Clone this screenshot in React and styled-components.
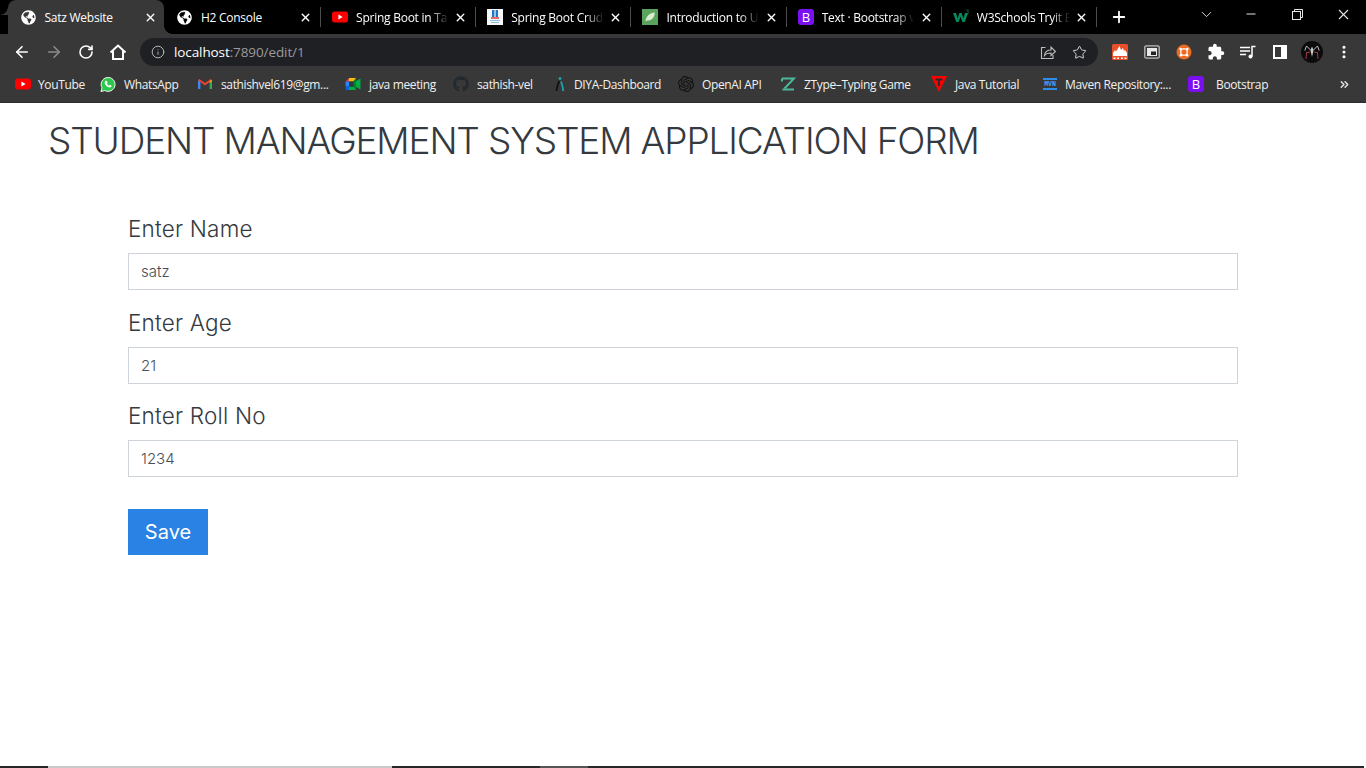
import React from 'react';
import styled, { createGlobalStyle } from 'styled-components';
import { ArrowLeft, ArrowRight, RotateCw, Info, Star, X, Plus, ChevronDown, Minus, EllipsisVertical, ChevronsRight } from 'lucide-react';
import { FaGlobeAmericas, FaGithub } from 'react-icons/fa';
import { MdExtension } from 'react-icons/md';
import { SiOpenai } from 'react-icons/si';

const GlobalStyle = createGlobalStyle`
  html, body {
    margin: 0;
    padding: 0;
    height: 100%;
    overflow: hidden;
    background: #fff;
  }
  * {
    box-sizing: border-box;
  }
`;

const YoutubeIcon = () => (
  <svg width="16" height="16" viewBox="0 0 16 16">
    <rect x="0" y="2.5" width="16" height="11" rx="3" fill="#f00" />
    <path d="M6.4 5.6 10.6 8 6.4 10.4z" fill="#fff" />
  </svg>
);

const WhatsappIcon = () => (
  <svg width="17" height="17" viewBox="0 0 17 17">
    <path d="M1 16l1.100-4A7.400 7.400 0 1 1 5 14.900z" fill="#2cc84d" stroke="#fff" strokeWidth="1" />
    <path d="M6.200 4.600c-.5 0-1.200.7-1.200 1.800 0 2.300 2.900 5.300 5.300 5.300 1.100 0 1.900-.7 1.900-1.300v-.7L10.400 8.800l-.9.9C8.700 9.400 7.600 8.300 7.300 7.500l.8-.9-.9-2z" fill="#fff" />
  </svg>
);

const SpringCrudIcon = () => (
  <svg width="16" height="16" viewBox="0 0 16 16">
    <rect width="16" height="16" fill="#f4f8fb" />
    <rect x="5" y="1" width="2.4" height="7" fill="#1f76c4" />
    <rect x="8.6" y="1" width="2.4" height="7" fill="#1f76c4" />
    <rect x="4" y="8" width="8" height="2" fill="#e86a6a" />
    <rect x="3" y="11" width="10" height="1" fill="#8fb8dc" />
    <rect x="4" y="13" width="8" height="1" fill="#8fb8dc" />
  </svg>
);

const LeafIcon = () => (
  <svg width="16" height="16" viewBox="0 0 16 16">
    <rect width="16" height="16" fill="#5ba35c" />
    <path d="M3.5 12.5C4 7 8 4 12.8 3.6 12.6 8.4 10 11.6 6 11.4 5.2 11.4 4.6 11.8 3.5 12.5z" fill="#d8ecd2" />
  </svg>
);

const BootstrapIcon = () => (
  <svg width="16" height="16" viewBox="0 0 16 16">
    <rect width="16" height="16" rx="3" fill="#7a10f0" />
    <text x="8" y="12.8" textAnchor="middle" fontFamily="'Open Sans', sans-serif" fontSize="13" fontWeight="500" fill="#fff">B</text>
  </svg>
);

const W3Icon = () => (
  <svg width="16" height="16" viewBox="0 0 16 16">
    <path d="M0 4h3l1.6 5.6L6.4 4h2.2l1.8 5.6L12 4h3l-3.2 9H9.4L7.5 7.8 5.6 13H3.2z" fill="#04895c" />
    <path d="M13.2 1h2.2v.6l-.9.9c.6.1 1 .5 1 1 0 .7-.6 1.1-1.3 1.1-.4 0-.8-.1-1.1-.3" fill="none" stroke="#04895c" strokeWidth=".7" />
  </svg>
);

const GmailIcon = () => (
  <svg width="16" height="16" viewBox="0 0 16 16">
    <path d="M1 13V4.200L3.400 5.400V13z" fill="#4285f4" />
    <path d="M12.600 13V5.400L15 4.200V13z" fill="#34a853" />
    <path d="M1 4.200 8 9.400 15 4.200 13.600 3 8 7 2.400 3z" fill="#ea4335" />
    <path d="M12.600 5.400 15 3.800V5l-2.400 1.900z" fill="#fbbc04" />
  </svg>
);

const MeetIcon = () => (
  <svg width="16" height="16" viewBox="0 0 16 16">
    <path d="M4 2h7v3.500H4z" fill="#fbbc04" />
    <path d="M.5 5.500 4 2v3.500z" fill="#ea4335" />
    <path d="M.5 5.500H4v5H.5z" fill="#2684fc" />
    <path d="M.5 10.500H4V14H2a1.500 1.500 0 0 1-1.500-1.500z" fill="#0066da" />
    <path d="M4 10.500h7V14H4z" fill="#00ac47" />
    <path d="M11 5l4.500-2.500v11L11 11z" fill="#00ac47" />
    <path d="M11 2v12l-3-3.500v-5z" fill="#00832d" />
    <path d="M4 5.500h4.500v5H4z" fill="#2b3a3f" />
  </svg>
);

const DiyaIcon = () => (
  <svg width="16" height="16" viewBox="0 0 16 16" fill="none">
    <circle cx="8" cy="2.600" r="1.400" fill="#1aa9b8" />
    <path d="M7.400 5C6 7.500 4.800 10.500 4.500 15" stroke="#111" strokeWidth="1.800" />
    <path d="M9 5.500C10 8 11 11 11.300 15" stroke="#18a6b5" strokeWidth="1.800" />
  </svg>
);

const ZTypeIcon = () => (
  <svg width="16" height="16" viewBox="0 0 16 16" fill="none">
    <path d="M2 2.500h12L4.500 12.500" stroke="#4cb89a" strokeWidth="2" />
    <path d="M2 5.500V2.500M2.500 13.500h11.500" stroke="#4cb89a" strokeWidth="2" />
  </svg>
);

const JavaIcon = () => (
  <svg width="16" height="16" viewBox="0 0 16 16">
    <path d="M0 0h16L8 16z" fill="#f00" />
    <path d="M4.500 2.500h7v2H9V10H7V4.500H4.500z" fill="#2a2a2a" />
  </svg>
);

const MavenIcon = () => (
  <svg width="16" height="16" viewBox="0 0 16 16">
    <rect x="1" y="2" width="14" height="2" fill="#2f8fe8" />
    <rect x="1" y="12" width="14" height="2" fill="#2f8fe8" />
    <text x="8" y="10.400" textAnchor="middle" fontFamily="'Liberation Mono', monospace" fontSize="6.500" fontWeight="700" fill="#4aa3f5">MVN</text>
  </svg>
);

const HomeIcon = () => (
  <svg width="18" height="18" viewBox="0 0 18 18" fill="none" stroke="#fff" strokeWidth="2">
    <path d="M1.500 9.500 9 2.500l7.500 7" />
    <path d="M4 8v8h10V8" />
  </svg>
);

const ShareIcon = () => (
  <svg width="16" height="16" viewBox="0 0 16 16" fill="none" stroke="#bdbdbd" strokeWidth="1.100">
    <path d="M5.500 3.500H1.500v11h11.500V11" />
    <path d="M4.500 11.500C5 7.500 8 6 11 6V3l4.500 4.500L11 11.500V9C8.500 9 6 9.500 4.500 11.500z" />
  </svg>
);

const FireExtIcon = () => (
  <svg width="16" height="16" viewBox="0 0 16 16">
    <rect width="16" height="16" rx="1.500" fill="#e8502a" />
    <path d="M1 12V9l2-3 1 1.500L7.500 2 9 6l2-2 1 3 1-1 2 3v3z" fill="#fff" />
    <path d="M1.500 13.500h2V15h-2zM5 13.500h2V15H5zM9 13.500h2V15H9zM12.500 13.500h2V15h-2z" fill="#fff" />
  </svg>
);

const PipExtIcon = () => (
  <svg width="16" height="16" viewBox="0 0 16 16" fill="none">
    <rect x=".8" y="1.800" width="14.400" height="12.400" rx="1.500" stroke="#bdbdbd" strokeWidth="1.300" />
    <rect x="3" y="4" width="10" height="8" fill="#e8e8e8" />
    <rect x="7" y="7.500" width="5" height="3.500" fill="#222" />
  </svg>
);

const UbuntuExtIcon = () => (
  <svg width="16" height="16" viewBox="0 0 16 16" fill="none">
    <circle cx="8" cy="8" r="7.500" fill="#ec6b23" />
    <circle cx="8" cy="8" r="3.300" stroke="#fbe0ce" strokeWidth="1.500" />
    <circle cx="4.600" cy="5" r="1.300" fill="#fff" />
    <circle cx="11.400" cy="5" r="1.300" fill="#fff" />
    <circle cx="5" cy="11.200" r="1.300" fill="#fff" />
    <circle cx="11" cy="11.200" r="1.300" fill="#fff" />
  </svg>
);

const QueueIcon = () => (
  <svg width="16" height="16" viewBox="0 0 16 16" fill="none" stroke="#fff">
    <path d="M0 3.500h10M0 7h10M0 10.500h6" strokeWidth="1.400" />
    <path d="M12 12.500V2.500h3.500" strokeWidth="1.500" />
    <circle cx="10.500" cy="12.500" r="2" fill="#fff" strokeWidth="0" />
  </svg>
);

const SidePanelIcon = () => (
  <svg width="14" height="14" viewBox="0 0 14 14">
    <path fillRule="evenodd" d="M0 0h14v14H0zM2 2v10h6V2z" fill="#fff" />
  </svg>
);

const SpiderAvatar = () => (
  <svg width="22" height="22" viewBox="0 0 22 22" fill="none">
    <circle cx="11" cy="11" r="11" fill="#0b0b0d" />
    <path d="M11 5.500 9.500 9l1.500 7 1.500-7z" fill="#c8ccd0" />
    <path d="M9.500 9 5.500 5 3.800 9.500M12.500 9l4-4 1.700 4.500" stroke="#b8bcc0" strokeWidth="1" />
    <path d="M9.500 11 5.500 11.500 5 18M12.500 11l4 .5.500 6.500" stroke="#a83a3a" strokeWidth="1" />
  </svg>
);

const RestoreIcon = () => (
  <svg width="11" height="11" viewBox="0 0 11 11" fill="none" stroke="#e6e6e6">
    <rect x=".5" y="2.500" width="8" height="8" />
    <path d="M2.500 2.500v-2h8v8h-2" />
  </svg>
);

const tabs = [
  { title: 'Satz Website', icon: <FaGlobeAmericas size={15} color="#fff" />, active: true },
  { title: 'H2 Console', icon: <FaGlobeAmericas size={15} color="#fff" /> },
  { title: 'Spring Boot in Ta', icon: <YoutubeIcon /> },
  { title: 'Spring Boot Crud', icon: <SpringCrudIcon /> },
  { title: 'Introduction to U', icon: <LeafIcon /> },
  { title: 'Text · Bootstrap v', icon: <BootstrapIcon /> },
  { title: 'W3Schools Tryit E', icon: <W3Icon /> },
];

const bookmarks = [
  { label: 'YouTube', icon: <YoutubeIcon />, width: 85, gap: 7 },
  { label: 'WhatsApp', icon: <WhatsappIcon />, width: 97 },
  { label: 'sathishvel619@gm...', icon: <GmailIcon />, width: 148 },
  { label: 'java meeting', icon: <MeetIcon />, width: 108 },
  { label: 'sathish-vel', icon: <FaGithub size={16} color="#24292e" />, width: 99 },
  { label: 'DIYA-Dashboard', icon: <DiyaIcon />, width: 126, gap: 6 },
  { label: 'OpenAI API', icon: <SiOpenai size={16} color="#111" />, width: 102 },
  { label: 'ZType–Typing Game', icon: <ZTypeIcon />, width: 151 },
  { label: 'Java Tutorial', icon: <JavaIcon />, width: 111 },
  { label: 'Maven Repository:...', icon: <MavenIcon />, width: 146, gap: 7 },
  { label: 'Bootstrap', icon: <BootstrapIcon />, width: 150, gap: 12 },
];

const fields = [
  { label: 'Enter Name', value: 'satz' },
  { label: 'Enter Age', value: '21' },
  { label: 'Enter Roll No', value: '1234' },
];

const App = () => {
  return (
    <Screen>
      <GlobalStyle />
      <TabStrip>
        {tabs.map((tab, i) => (
          <Tab key={tab.title} $active={tab.active} $divider={i > 1}>
            <TabIcon>{tab.icon}</TabIcon>
            <TabTitle $fade={i > 1}>{tab.title}</TabTitle>
            <TabClose>
              <X size={13} strokeWidth={2.6} color="#fff" />
            </TabClose>
          </Tab>
        ))}
        <NewTab>
          <Plus size={18} strokeWidth={2.4} color="#fff" />
        </NewTab>
        <WindowControls>
          <WindowButton $w={44}>
            <ChevronDown size={17} strokeWidth={1.3} color="#e6e6e6" />
          </WindowButton>
          <WindowButton $w={46}>
            <Minus size={14} strokeWidth={1.7} color="#e6e6e6" />
          </WindowButton>
          <WindowButton $w={46}>
            <RestoreIcon />
          </WindowButton>
          <WindowButton $w={46}>
            <X size={17} strokeWidth={1.5} color="#e6e6e6" />
          </WindowButton>
        </WindowControls>
      </TabStrip>

      <Toolbar>
        <NavButton><ArrowLeft size={18} strokeWidth={2.2} color="#fff" /></NavButton>
        <NavButton><ArrowRight size={18} strokeWidth={2.2} color="#8a8a8a" /></NavButton>
        <NavButton><RotateCw size={16} strokeWidth={2.4} color="#fff" /></NavButton>
        <NavButton><HomeIcon /></NavButton>
        <Omnibox>
          <Info size={14} strokeWidth={1.6} color="#bdbdbd" />
          <Url>localhost<UrlRest>:7890/edit/1</UrlRest></Url>
          <OmniActions>
            <ShareIcon />
            <Star size={15} strokeWidth={1.5} color="#dcdcdc" />
          </OmniActions>
        </Omnibox>
        <Extensions>
          <ExtButton><FireExtIcon /></ExtButton>
          <ExtButton><PipExtIcon /></ExtButton>
          <ExtButton><UbuntuExtIcon /></ExtButton>
          <ExtButton><MdExtension size={18} color="#fff" /></ExtButton>
          <ExtButton><QueueIcon /></ExtButton>
          <ExtButton><SidePanelIcon /></ExtButton>
          <ExtButton><SpiderAvatar /></ExtButton>
          <ExtButton><EllipsisVertical size={16} strokeWidth={2.6} color="#fff" /></ExtButton>
        </Extensions>
      </Toolbar>

      <BookmarkBar>
        {bookmarks.map((b) => (
          <Bookmark key={b.label} $w={b.width}>
            <BookmarkIcon>{b.icon}</BookmarkIcon>
            <BookmarkLabel $gap={b.gap}>{b.label}</BookmarkLabel>
          </Bookmark>
        ))}
        <MoreBookmarks>
          <ChevronsRight size={13} strokeWidth={2.6} color="#e6e6e6" />
        </MoreBookmarks>
      </BookmarkBar>

      <Page>
        <Heading>STUDENT MANAGEMENT SYSTEM APPLICATION FORM</Heading>
        <Form onSubmit={(e) => e.preventDefault()}>
          {fields.map((f) => (
            <Field key={f.label}>
              <Label>{f.label}</Label>
              <Input type="text" defaultValue={f.value} />
            </Field>
          ))}
          <SaveButton type="submit">Save</SaveButton>
        </Form>
      </Page>

      <Taskbar>
        <TaskSegment $w={48} $color="#272727" />
        <TaskSegment $w={344} $color="#c9c9c9" />
        <TaskSegment $w={148} $color="#272727" />
        <TaskSegment $w={48} $color="#555555" />
        <TaskSegment $w={776} $color="#272727" />
      </Taskbar>
    </Screen>
  );
};

export default App;

const Screen = styled.div`
  width: 1366px;
  height: 768px;
  display: flex;
  flex-direction: column;
  overflow: hidden;
  font-family: 'Open Sans', 'Liberation Sans', sans-serif;
`;

const TabStrip = styled.div`
  height: 34px;
  flex: none;
  display: flex;
  padding-left: 8px;
  background: #000;
`;

const Tab = styled.div`
  position: relative;
  width: ${(p) => (p.$active ? 156.4 : 155.2)}px;
  flex: none;
  display: flex;
  align-items: center;
  padding: 0 6px 0 12.5px;
  color: #fff;
  border-radius: 8px 8px 0 0;
  background: ${(p) => (p.$active ? '#383838' : 'transparent')};

  &::before {
    content: '';
    display: ${(p) => (p.$divider ? 'block' : 'none')};
    position: absolute;
    left: 0.5px;
    top: 7px;
    width: 1px;
    height: 20px;
    background: #4d4d4d;
  }

  ${(p) =>
    p.$active &&
    `
    &::before, &::after {
      content: '';
      display: block;
      position: absolute;
      bottom: 0;
      width: 8px;
      height: 8px;
    }
    &::before {
      left: -8px;
      background: radial-gradient(circle at 0 0, transparent 7.5px, #383838 8px);
    }
    &::after {
      right: -8px;
      background: radial-gradient(circle at 100% 0, transparent 7.5px, #383838 8px);
    }
  `}
`;

const TabIcon = styled.span`
  width: 16px;
  height: 16px;
  flex: none;
  display: flex;
  align-items: center;
  justify-content: center;
`;

const TabTitle = styled.span`
  flex: 1;
  min-width: 0;
  margin: 0 2px 0 8px;
  white-space: nowrap;
  font-size: 12px;
  letter-spacing: -0.25px;
  mask-image: ${(p) => (p.$fade ? 'linear-gradient(90deg, #000 78%, transparent 98%)' : 'none')};
`;

const TabClose = styled.span`
  width: 16px;
  height: 16px;
  flex: none;
  display: flex;
  align-items: center;
  justify-content: center;
`;

const NewTab = styled.div`
  position: relative;
  width: 46px;
  flex: none;
  display: flex;
  align-items: center;
  justify-content: center;

  &::before {
    content: '';
    position: absolute;
    left: 0.5px;
    top: 7px;
    width: 1px;
    height: 20px;
    background: #4d4d4d;
  }
`;

const WindowControls = styled.div`
  margin-left: auto;
  display: flex;
`;

const WindowButton = styled.div`
  width: ${(p) => p.$w}px;
  height: 28px;
  display: flex;
  align-items: center;
  justify-content: center;
`;

const Toolbar = styled.div`
  height: 32px;
  flex: none;
  display: flex;
  align-items: flex-end;
  padding-left: 6px;
  background: #383838;
`;

const NavButton = styled.div`
  width: 32px;
  height: 28px;
  flex: none;
  display: flex;
  align-items: center;
  justify-content: center;
`;

const Omnibox = styled.div`
  width: 958px;
  height: 28px;
  flex: none;
  margin-left: 6px;
  padding: 0 11px;
  display: flex;
  align-items: center;
  border-radius: 14px;
  background: #1f2024;
`;

const Url = styled.span`
  margin-left: 9px;
  font-size: 13.5px;
  letter-spacing: -0.1px;
  color: #fff;
`;

const UrlRest = styled.span`
  color: #9a9a9a;
`;

const OmniActions = styled.div`
  margin-left: auto;
  display: flex;
  align-items: center;
  gap: 16px;
`;

const Extensions = styled.div`
  flex: none;
  margin-left: 6px;
  display: flex;
`;

const ExtButton = styled.div`
  width: 32px;
  height: 28px;
  display: flex;
  align-items: center;
  justify-content: center;
`;

const BookmarkBar = styled.div`
  height: 37px;
  flex: none;
  display: flex;
  align-items: center;
  padding-left: 15px;
  background: #383838;
  border-bottom: 1px solid #2c2c2c;
`;

const Bookmark = styled.div`
  width: ${(p) => p.$w}px;
  flex: none;
  display: flex;
  align-items: center;
  min-width: 0;
`;

const BookmarkIcon = styled.span`
  width: 16px;
  height: 16px;
  flex: none;
  display: flex;
  align-items: center;
  justify-content: center;
`;

const BookmarkLabel = styled.span`
  margin-left: ${(p) => p.$gap || 8}px;
  white-space: nowrap;
  font-size: 12px;
  letter-spacing: -0.36px;
  color: #f1f1f1;
`;

const MoreBookmarks = styled.div`
  margin-left: auto;
  margin-right: 16px;
  display: flex;
`;

const Page = styled.main`
  flex: 1;
  min-height: 0;
  padding: 14px 128px 0 48px;
  background: #fff;
`;

const Heading = styled.h1`
  margin: 0;
  font-family: Inter, 'Open Sans', sans-serif;
  font-size: 37px;
  line-height: 48px;
  font-weight: 300;
  letter-spacing: -1.15px;
  color: #343a40;
`;

const Form = styled.form`
  margin: 45px 0 0 80px;
  display: flex;
  flex-direction: column;
`;

const Field = styled.div`
  height: 93.5px;
  display: flex;
  flex-direction: column;
`;

const Label = styled.label`
  height: 37px;
  display: flex;
  align-items: center;
  margin-bottom: 6px;
  font-family: Inter, 'Open Sans', sans-serif;
  font-size: 22.5px;
  font-weight: 300;
  letter-spacing: 0.2px;
  color: #343a40;
`;

const Input = styled.input`
  width: 1110px;
  height: 37px;
  padding: 0 12px;
  border: 1px solid #ced4da;
  outline: none;
  background: #fff;
  font-family: Inter, 'Open Sans', sans-serif;
  font-size: 15px;
  font-weight: 300;
  color: #495057;
`;

const SaveButton = styled.button`
  width: 80px;
  height: 46px;
  margin-top: 18px;
  padding: 0;
  border: none;
  background: #2a82e4;
  font-family: Inter, 'Open Sans', sans-serif;
  font-size: 20px;
  color: #fff;
`;

const Taskbar = styled.div`
  height: 2px;
  flex: none;
  display: flex;
`;

const TaskSegment = styled.div`
  width: ${(p) => p.$w}px;
  background: ${(p) => p.$color};
`;
